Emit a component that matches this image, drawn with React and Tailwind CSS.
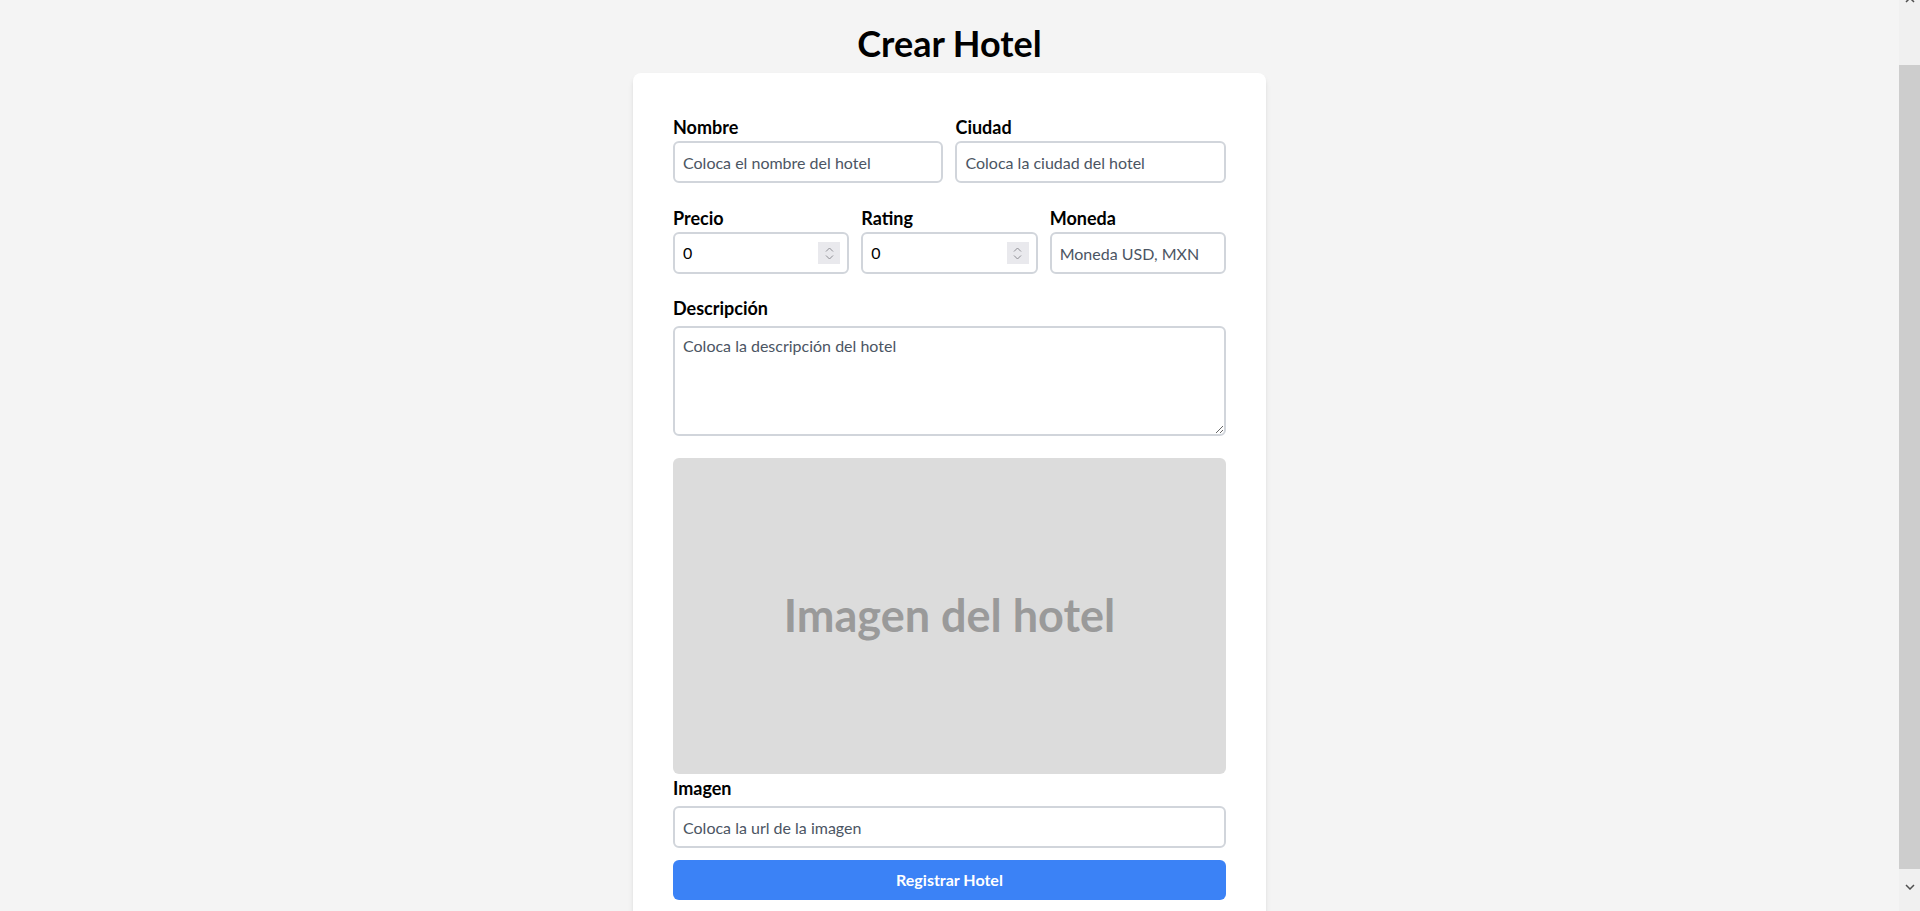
import { useState } from "react";

const Spinner = () => (
  <div className="flex h-[22px] w-[22px] flex-col items-center justify-center gap-[3px] bg-[#e9e9ed]">
    <svg width="9" height="5" viewBox="0 0 9 5" fill="none">
      <path d="M1 4.5L4.5 1L8 4.5" stroke="#8d8d93" strokeWidth="1" />
    </svg>
    <svg width="9" height="5" viewBox="0 0 9 5" fill="none">
      <path d="M1 0.5L4.5 4L8 0.5" stroke="#8d8d93" strokeWidth="1" />
    </svg>
  </div>
);

const Label = ({ children, htmlFor }) => (
  <label
    htmlFor={htmlFor}
    className="block text-lg leading-6 font-bold text-black"
  >
    {children}
  </label>
);

const inputClass =
  "mt-0.5 h-[42px] w-full rounded-md border-2 border-[#d1d5db] bg-white px-2 text-base text-black outline-none placeholder:text-[#4b5563]";

const NumberField = ({ id, label, value, onChange }) => (
  <div>
    <Label htmlFor={id}>{label}</Label>
    <div className="mt-0.5 flex h-[42px] w-full items-center rounded-md border-2 border-[#d1d5db] bg-white pl-2 pr-[7px]">
      <input
        id={id}
        type="text"
        inputMode="numeric"
        value={value}
        onChange={(e) => onChange(e.target.value)}
        className="min-w-0 flex-1 bg-transparent text-base text-black outline-none"
      />
      <Spinner />
    </div>
  </div>
);

const Scrollbar = () => (
  <div className="flex h-[911px] w-[21px] shrink-0 flex-col bg-[#f0f0f0]">
    <div className="flex h-[65px] justify-center">
      <svg width="10" height="6" viewBox="0 0 10 6" className="-mt-[3px]">
        <path d="M1 5L5 1L9 5" stroke="#505050" strokeWidth="1.5" fill="none" />
      </svg>
    </div>
    <div className="h-[804px] bg-[#cdcdcd]" />
    <div className="flex flex-1 items-start justify-center pt-[15px]">
      <svg width="10" height="6" viewBox="0 0 10 6">
        <path d="M1 1L5 5L9 1" stroke="#505050" strokeWidth="1.5" fill="none" />
      </svg>
    </div>
  </div>
);

const App = () => {
  const [precio, setPrecio] = useState("0");
  const [rating, setRating] = useState("0");

  return (
    <div className="flex h-[911px] overflow-hidden bg-[#f4f4f4] font-['Lato',sans-serif]">
      <div className="flex min-w-0 flex-1 flex-col items-center">
        {/* navbar, scrolled out of view */}
        <div className="h-[3px] w-full bg-white shadow-[0_2px_6px_rgba(0,0,0,0.35)]" />

        <h1 className="mt-[23px] text-4xl leading-10 font-bold text-black">
          Crear Hotel
        </h1>

        <form
          onSubmit={(e) => e.preventDefault()}
          className="mt-2.5 w-1/3 shrink-0 rounded-lg bg-white px-10 pt-[42px] pb-10 shadow-md"
        >
          <div className="grid grid-cols-2 gap-3">
            <div>
              <Label htmlFor="nombre">Nombre</Label>
              <input
                id="nombre"
                className={inputClass}
                placeholder="Coloca el nombre del hotel"
              />
            </div>
            <div>
              <Label htmlFor="ciudad">Ciudad</Label>
              <input
                id="ciudad"
                className={inputClass}
                placeholder="Coloca la ciudad del hotel"
              />
            </div>
          </div>

          <div className="mt-[23px] grid grid-cols-3 gap-3">
            <NumberField
              id="precio"
              label="Precio"
              value={precio}
              onChange={setPrecio}
            />
            <NumberField
              id="rating"
              label="Rating"
              value={rating}
              onChange={setRating}
            />
            <div>
              <Label htmlFor="moneda">Moneda</Label>
              <input
                id="moneda"
                className={inputClass}
                placeholder="Moneda USD, MXN"
              />
            </div>
          </div>

          <div className="mt-[22px]">
            <Label htmlFor="descripcion">Descripción</Label>
            <textarea
              id="descripcion"
              className="mt-1.5 block h-[110px] w-full rounded-md border-2 border-[#d1d5db] bg-white px-2 py-1.5 text-base text-black outline-none placeholder:text-[#4b5563]"
              placeholder="Coloca la descripción del hotel"
            />
          </div>

          {/* image preview */}
          <div className="mt-[22px] flex h-[316px] items-center justify-center rounded-md bg-[#dcdcdc]">
            <span className="text-[45px] font-bold text-[#9a9a9a]">
              Imagen del hotel
            </span>
          </div>

          <div className="mt-0.5">
            <Label htmlFor="imagen">Imagen</Label>
            <input
              id="imagen"
              className={`${inputClass} !mt-1.5`}
              placeholder="Coloca la url de la imagen"
            />
          </div>

          <button
            type="submit"
            className="mt-3 h-10 w-full rounded-md bg-[#3b82f6] text-base font-bold text-white"
          >
            Registrar Hotel
          </button>
        </form>
      </div>
      <Scrollbar />
    </div>
  );
};

export default App;
